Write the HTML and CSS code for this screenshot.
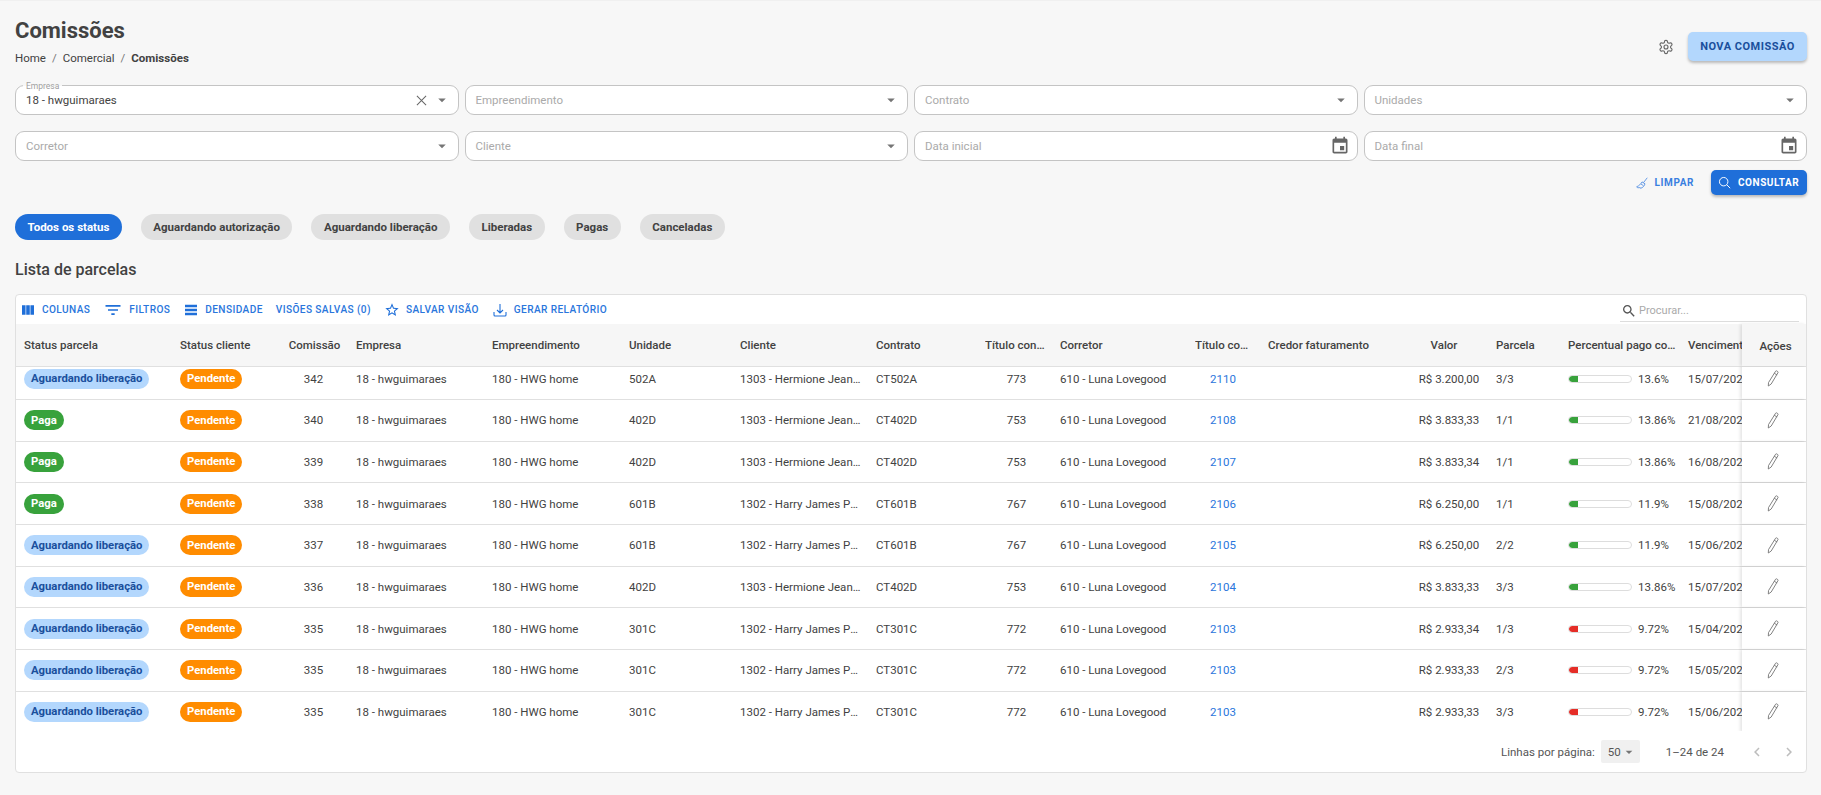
FILE: index.html
```html
<!DOCTYPE html>
<html lang="pt-BR">
<head>
<meta charset="utf-8">
<title>Comissões</title>
<link rel="stylesheet" href="styles.css">
</head>
<body>
<svg class="defs" width="0" height="0" aria-hidden="true">
  <symbol id="i-drop" viewBox="0 0 24 24"><path d="M7 10l5 5 5-5z"/></symbol>
  <symbol id="i-cal" viewBox="0 0 24 24"><path d="M17 12h-5v5h5v-5zM16 1v2H8V1H6v2H5c-1.11 0-1.99.9-1.99 2L3 19c0 1.1.89 2 2 2h14c1.1 0 2-.9 2-2V5c0-1.1-.9-2-2-2h-1V1h-2zm3 18H5V8h14v11z"/></symbol>
  <symbol id="i-pen" viewBox="0 0 12 17"><path d="M8.6 1.2c.3-.4.7-.5 1.1-.3l1 .6c.4.3.5.7.3 1.1L4.2 14 1.3 16l.2-3.4zM7.2 3.2l2.9 1.8" fill="none" stroke="currentColor" stroke-width=".9" stroke-linejoin="round"/></symbol>
</svg>
<main class="page">
  <header class="top">
    <div class="top-left">
      <h1 class="title">Comissões</h1>
      <nav class="crumbs"><span>Home</span><span class="sep">/</span><span>Comercial</span><span class="sep">/</span><strong>Comissões</strong></nav>
    </div>
    <div class="top-right">
      <svg class="gear" viewBox="0 0 24 24" fill="none" stroke="currentColor" stroke-width="1.7" stroke-linejoin="round"><path d="M12.22 2h-.44a2 2 0 0 0-2 2v.18a2 2 0 0 1-1 1.73l-.43.25a2 2 0 0 1-2 0l-.15-.08a2 2 0 0 0-2.73.73l-.22.38a2 2 0 0 0 .73 2.73l.15.1a2 2 0 0 1 1 1.72v.51a2 2 0 0 1-1 1.74l-.15.09a2 2 0 0 0-.73 2.73l.22.38a2 2 0 0 0 2.73.73l.15-.08a2 2 0 0 1 2 0l.43.25a2 2 0 0 1 1 1.73V20a2 2 0 0 0 2 2h.44a2 2 0 0 0 2-2v-.18a2 2 0 0 1 1-1.73l.43-.25a2 2 0 0 1 2 0l.15.08a2 2 0 0 0 2.73-.73l.22-.39a2 2 0 0 0-.73-2.73l-.15-.08a2 2 0 0 1-1-1.74v-.5a2 2 0 0 1 1-1.74l.15-.09a2 2 0 0 0 .73-2.73l-.22-.38a2 2 0 0 0-2.73-.73l-.15.08a2 2 0 0 1-2 0l-.43-.25a2 2 0 0 1-1-1.73V4a2 2 0 0 0-2-2z"/><circle cx="12" cy="12" r="3"/></svg>
      <button class="btn-new">NOVA COMISSÃO</button>
    </div>
  </header>

  <section class="filters">
    <div class="field"><span class="float">Empresa</span><span class="value">18 - hwguimaraes</span>
      <svg class="x" viewBox="0 0 12 12" fill="none" stroke="currentColor" stroke-width="1.1"><path d="M1 1l10 10M11 1L1 11"/></svg>
      <svg class="drop"><use href="#i-drop"/></svg></div>
    <div class="field"><span class="ph">Empreendimento</span><svg class="drop"><use href="#i-drop"/></svg></div>
    <div class="field"><span class="ph">Contrato</span><svg class="drop"><use href="#i-drop"/></svg></div>
    <div class="field"><span class="ph">Unidades</span><svg class="drop"><use href="#i-drop"/></svg></div>
    <div class="field"><span class="ph">Corretor</span><svg class="drop"><use href="#i-drop"/></svg></div>
    <div class="field"><span class="ph">Cliente</span><svg class="drop"><use href="#i-drop"/></svg></div>
    <div class="field"><span class="ph">Data inicial</span><svg class="cal"><use href="#i-cal"/></svg></div>
    <div class="field"><span class="ph">Data final</span><svg class="cal"><use href="#i-cal"/></svg></div>
  </section>

  <div class="actions">
    <button class="btn-clear">
      <svg class="broom" viewBox="0 0 16 16" fill="none" stroke="currentColor" stroke-width="1" stroke-linejoin="round"><path d="M15 1L10 7.5M8 6.5l4 2.6c-.7 2.8-3 5.2-6 6l-.8-1.4-.9 1L2.7 14l-.6.3L.8 13c3.2-1 5.6-3.6 7.2-6.5zM6.4 9.2l3.6 2.4"/></svg>
      LIMPAR</button>
    <button class="btn-search">
      <svg class="mag" viewBox="0 0 16 16" fill="none" stroke="currentColor" stroke-width="1.2"><circle cx="7" cy="7" r="5.2"/><path d="M10.8 10.8l4.2 4.2"/></svg>
      CONSULTAR</button>
  </div>

  <div class="pills">
    <span class="pill on">Todos os status</span>
    <span class="pill">Aguardando autorização</span>
    <span class="pill">Aguardando liberação</span>
    <span class="pill">Liberadas</span>
    <span class="pill">Pagas</span>
    <span class="pill">Canceladas</span>
  </div>

  <h2 class="list-title">Lista de parcelas</h2>

  <section class="card">
    <div class="toolbar">
      <button class="tool"><svg class="t16" viewBox="0 0 24 24"><path d="M14.67 5v14H9.33V5h5.34zm1 14H21V5h-5.33v14zm-7.34 0V5H3v14h5.33z"/></svg>COLUNAS</button>
      <button class="tool"><svg class="t20" viewBox="0 0 24 24"><path d="M10 18h4v-2h-4v2zM3 6v2h18V6H3zm3 7h12v-2H6v2z"/></svg>FILTROS</button>
      <button class="tool"><svg class="t16" viewBox="0 0 24 24"><path d="M21 8H3V4h18v4zm0 2H3v4h18v-4zm0 6H3v4h18v-4z"/></svg>DENSIDADE</button>
      <button class="tool">VISÕES SALVAS (0)</button>
      <button class="tool"><svg class="t16" viewBox="0 0 24 24"><path d="M22 9.24l-7.19-.62L12 2 9.19 8.63 2 9.24l5.46 4.73L5.82 21 12 17.27 18.18 21l-1.63-7.03L22 9.24zM12 15.4l-3.76 2.27 1-4.28-3.32-2.88 4.38-.38L12 6.1l1.71 4.04 4.38.38-3.32 2.88 1 4.28L12 15.4z"/></svg>SALVAR VISÃO</button>
      <button class="tool"><svg class="t16 ln" viewBox="0 0 16 16"><path d="M2 10v3a1 1 0 0 0 1 1h10a1 1 0 0 0 1-1v-3M8 2v8.5M5 8l3 3 3-3"/></svg>GERAR RELATÓRIO</button>
      <div class="search">
        <svg class="search-i" viewBox="0 0 24 24"><path d="M15.5 14h-.79l-.28-.27C15.41 12.59 16 11.11 16 9.5 16 5.91 13.09 3 9.5 3S3 5.91 3 9.5 5.91 16 9.5 16c1.61 0 3.09-.59 4.23-1.57l.27.28v.79l5 4.99L20.49 19l-4.99-5zm-6 0C7.01 14 5 11.99 5 9.5S7.01 5 9.5 5 14 7.01 14 9.5 11.99 14 9.5 14z"/></svg>
        <span class="search-ph">Procurar...</span>
      </div>
    </div>

    <div class="row head">
      <div class="c">Status parcela</div><div class="c">Status cliente</div><div class="c mid h-com">Comissão</div><div class="c">Empresa</div><div class="c">Empreendimento</div><div class="c">Unidade</div><div class="c">Cliente</div><div class="c">Contrato</div><div class="c mid h-tc"><span class="clip">Título contrato</span></div><div class="c">Corretor</div><div class="c mid h-tc2"><span class="clip">Título comissão</span></div><div class="c">Credor faturamento</div><div class="c mid h-val">Valor</div><div class="c">Parcela</div><div class="c h-pct"><span class="clip">Percentual pago comissão</span></div><div class="c cut">Vencimento</div><div class="c act act-h">Ações</div>
    </div>

    <div class="body">
      <div class="row"><div class="c"><span class="chip wait">Aguardando liberação</span></div><div class="c"><span class="chip pend">Pendente</span></div><div class="c mid">342</div><div class="c">18 - hwguimaraes</div><div class="c">180 - HWG home</div><div class="c">502A</div><div class="c"><span class="clip">1303 - Hermione Jean Granger</span></div><div class="c">CT502A</div><div class="c mid">773</div><div class="c">610 - Luna Lovegood</div><div class="c mid link">2110</div><div class="c"></div><div class="c mid">R$ 3.200,00</div><div class="c">3/3</div><div class="c pct"><span class="bar"><span class="fill ok" style="width:13.6%"></span></span>13.6%</div><div class="c cut">15/07/2025</div><div class="c act"><svg class="pen"><use href="#i-pen"/></svg></div></div>
      <div class="row"><div class="c"><span class="chip paid">Paga</span></div><div class="c"><span class="chip pend">Pendente</span></div><div class="c mid">340</div><div class="c">18 - hwguimaraes</div><div class="c">180 - HWG home</div><div class="c">402D</div><div class="c"><span class="clip">1303 - Hermione Jean Granger</span></div><div class="c">CT402D</div><div class="c mid">753</div><div class="c">610 - Luna Lovegood</div><div class="c mid link">2108</div><div class="c"></div><div class="c mid">R$ 3.833,33</div><div class="c">1/1</div><div class="c pct"><span class="bar"><span class="fill ok" style="width:13.86%"></span></span>13.86%</div><div class="c cut">21/08/2025</div><div class="c act"><svg class="pen"><use href="#i-pen"/></svg></div></div>
      <div class="row"><div class="c"><span class="chip paid">Paga</span></div><div class="c"><span class="chip pend">Pendente</span></div><div class="c mid">339</div><div class="c">18 - hwguimaraes</div><div class="c">180 - HWG home</div><div class="c">402D</div><div class="c"><span class="clip">1303 - Hermione Jean Granger</span></div><div class="c">CT402D</div><div class="c mid">753</div><div class="c">610 - Luna Lovegood</div><div class="c mid link">2107</div><div class="c"></div><div class="c mid">R$ 3.833,34</div><div class="c">1/1</div><div class="c pct"><span class="bar"><span class="fill ok" style="width:13.86%"></span></span>13.86%</div><div class="c cut">16/08/2025</div><div class="c act"><svg class="pen"><use href="#i-pen"/></svg></div></div>
      <div class="row"><div class="c"><span class="chip paid">Paga</span></div><div class="c"><span class="chip pend">Pendente</span></div><div class="c mid">338</div><div class="c">18 - hwguimaraes</div><div class="c">180 - HWG home</div><div class="c">601B</div><div class="c"><span class="clip">1302 - Harry James Potter</span></div><div class="c">CT601B</div><div class="c mid">767</div><div class="c">610 - Luna Lovegood</div><div class="c mid link">2106</div><div class="c"></div><div class="c mid">R$ 6.250,00</div><div class="c">1/1</div><div class="c pct"><span class="bar"><span class="fill ok" style="width:11.9%"></span></span>11.9%</div><div class="c cut">15/08/2025</div><div class="c act"><svg class="pen"><use href="#i-pen"/></svg></div></div>
      <div class="row"><div class="c"><span class="chip wait">Aguardando liberação</span></div><div class="c"><span class="chip pend">Pendente</span></div><div class="c mid">337</div><div class="c">18 - hwguimaraes</div><div class="c">180 - HWG home</div><div class="c">601B</div><div class="c"><span class="clip">1302 - Harry James Potter</span></div><div class="c">CT601B</div><div class="c mid">767</div><div class="c">610 - Luna Lovegood</div><div class="c mid link">2105</div><div class="c"></div><div class="c mid">R$ 6.250,00</div><div class="c">2/2</div><div class="c pct"><span class="bar"><span class="fill ok" style="width:11.9%"></span></span>11.9%</div><div class="c cut">15/06/2025</div><div class="c act"><svg class="pen"><use href="#i-pen"/></svg></div></div>
      <div class="row"><div class="c"><span class="chip wait">Aguardando liberação</span></div><div class="c"><span class="chip pend">Pendente</span></div><div class="c mid">336</div><div class="c">18 - hwguimaraes</div><div class="c">180 - HWG home</div><div class="c">402D</div><div class="c"><span class="clip">1303 - Hermione Jean Granger</span></div><div class="c">CT402D</div><div class="c mid">753</div><div class="c">610 - Luna Lovegood</div><div class="c mid link">2104</div><div class="c"></div><div class="c mid">R$ 3.833,33</div><div class="c">3/3</div><div class="c pct"><span class="bar"><span class="fill ok" style="width:13.86%"></span></span>13.86%</div><div class="c cut">15/07/2025</div><div class="c act"><svg class="pen"><use href="#i-pen"/></svg></div></div>
      <div class="row"><div class="c"><span class="chip wait">Aguardando liberação</span></div><div class="c"><span class="chip pend">Pendente</span></div><div class="c mid">335</div><div class="c">18 - hwguimaraes</div><div class="c">180 - HWG home</div><div class="c">301C</div><div class="c"><span class="clip">1302 - Harry James Potter</span></div><div class="c">CT301C</div><div class="c mid">772</div><div class="c">610 - Luna Lovegood</div><div class="c mid link">2103</div><div class="c"></div><div class="c mid">R$ 2.933,34</div><div class="c">1/3</div><div class="c pct"><span class="bar"><span class="fill low" style="width:9.72%"></span></span>9.72%</div><div class="c cut">15/04/2025</div><div class="c act"><svg class="pen"><use href="#i-pen"/></svg></div></div>
      <div class="row"><div class="c"><span class="chip wait">Aguardando liberação</span></div><div class="c"><span class="chip pend">Pendente</span></div><div class="c mid">335</div><div class="c">18 - hwguimaraes</div><div class="c">180 - HWG home</div><div class="c">301C</div><div class="c"><span class="clip">1302 - Harry James Potter</span></div><div class="c">CT301C</div><div class="c mid">772</div><div class="c">610 - Luna Lovegood</div><div class="c mid link">2103</div><div class="c"></div><div class="c mid">R$ 2.933,33</div><div class="c">2/3</div><div class="c pct"><span class="bar"><span class="fill low" style="width:9.72%"></span></span>9.72%</div><div class="c cut">15/05/2025</div><div class="c act"><svg class="pen"><use href="#i-pen"/></svg></div></div>
      <div class="row"><div class="c"><span class="chip wait">Aguardando liberação</span></div><div class="c"><span class="chip pend">Pendente</span></div><div class="c mid">335</div><div class="c">18 - hwguimaraes</div><div class="c">180 - HWG home</div><div class="c">301C</div><div class="c"><span class="clip">1302 - Harry James Potter</span></div><div class="c">CT301C</div><div class="c mid">772</div><div class="c">610 - Luna Lovegood</div><div class="c mid link">2103</div><div class="c"></div><div class="c mid">R$ 2.933,33</div><div class="c">3/3</div><div class="c pct"><span class="bar"><span class="fill low" style="width:9.72%"></span></span>9.72%</div><div class="c cut">15/06/2025</div><div class="c act"><svg class="pen"><use href="#i-pen"/></svg></div></div>
    </div>

    <footer class="foot">
      <span class="foot-label">Linhas por página:</span>
      <span class="per"><span>50</span><svg class="per-drop"><use href="#i-drop"/></svg></span>
      <span class="range">1–24 de 24</span>
      <svg class="chev" viewBox="0 0 24 24"><path d="M15.41 7.41L14 6l-6 6 6 6 1.41-1.41L10.83 12z"/></svg>
      <svg class="chev" viewBox="0 0 24 24"><path d="M10 6L8.59 7.41 13.17 12l-4.58 4.59L10 18l6-6z"/></svg>
    </footer>
  </section>
</main>
</body>
</html>
```

FILE: styles.css
```css
* { box-sizing: border-box; }
html, body { margin: 0; height: 100%; }
body { background: #f7f7f7; color: #424242; font-family: Roboto, "Liberation Sans", sans-serif; font-size: 11.5px; overflow: hidden; }
button { font-family: inherit; border: 0; background: none; padding: 0; cursor: pointer; }
.defs { position: absolute; }
.page { height: 795px; padding: 0 14px 0 15px; border-top: 1px solid #f0f0f0; }

.top { display: flex; justify-content: space-between; height: 84px; padding-top: 16px; }
.title { margin: 0; font-size: 22px; line-height: 28px; font-weight: 700; color: #424242; }
.crumbs { display: flex; margin-top: 5px; font-size: 11.5px; line-height: 16px; color: #424242; }
.crumbs .sep { margin: 0 6px; color: #777; }
.crumbs strong { font-weight: 700; }
.top-right { display: flex; align-items: center; height: 29px; margin-top: 15px; }
.gear { width: 16px; height: 16px; color: #666; margin-right: 14px; }
.btn-new { width: 119px; height: 29px; border-radius: 5px; background: #b3d7fd; color: #1a4f9c; font-size: 11px; font-weight: 700; letter-spacing: .5px; box-shadow: 0 2px 3px rgba(0,0,0,.25); }

.filters { display: grid; grid-template-columns: repeat(4, 1fr); gap: 16px 6px; }
.field { position: relative; display: flex; align-items: center; height: 30px; padding: 0 7px 0 10px; background: #fff; border: 1px solid #c4c4c4; border-radius: 9px; font-size: 11.5px; }
.float { position: absolute; left: 7px; top: -5px; padding: 0 3px; font-size: 8.5px; line-height: 10px; color: #a0a0a0; background: linear-gradient(#f7f7f7 50%, #fff 50%); }
.value { flex: 1; color: #424242; }
.ph { flex: 1; color: #aaa; }
.x { width: 11px; height: 11px; color: #666; margin-right: 6px; }
.drop { width: 18px; height: 18px; fill: #757575; }
.cal { width: 20px; height: 20px; fill: #666; }

.actions { display: flex; justify-content: flex-end; align-items: center; margin-top: 9px; height: 25px; }
.btn-clear { display: flex; align-items: center; gap: 7px; color: #3a7fe0; font-size: 10px; font-weight: 700; letter-spacing: .6px; margin-right: 17px; }
.broom { width: 12px; height: 12px; }
.btn-search { display: flex; align-items: center; gap: 7px; width: 96px; height: 25px; padding-left: 7px; border-radius: 5px; background: #1f6fd9; color: #fff; font-size: 10px; font-weight: 700; letter-spacing: .55px; box-shadow: 0 2px 3px rgba(0,0,0,.25); }
.mag { width: 13px; height: 13px; }

.pills { display: flex; gap: 19px; margin-top: 19px; }
.pill { display: flex; align-items: center; height: 26px; padding: 0 12.5px; border-radius: 13px; background: #e0e0e0; color: #424242; font-size: 11.5px; font-weight: 700; }
.pill.on { background: #1f6fd9; color: #fff; }

.list-title { margin: 20px 0 0; height: 20px; font-size: 16px; line-height: 20px; font-weight: 500; color: #424242; }

.card { margin-top: 14px; height: 479px; background: #fff; border: 1px solid #e0e0e0; border-radius: 4px; overflow: hidden; }

.toolbar { display: flex; align-items: center; gap: 13px; height: 29px; padding: 0 7px 0 4px; }
.tool { display: flex; align-items: center; gap: 6px; color: #2a76dc; font-size: 10.1px; font-weight: 500; letter-spacing: .4px; white-space: nowrap; }
.tool svg { fill: #1f6fd9; flex: none; }
.tool .ln { fill: none; stroke: #1f6fd9; stroke-width: 1.1; }
.t16 { width: 16px; height: 16px; }
.t20 { width: 20px; height: 20px; }
.search { display: flex; align-items: center; gap: 2px; width: 179px; height: 22px; margin: 3px 0 0 auto; border-bottom: 1px solid #ddd; }
.search-i { width: 16px; height: 16px; fill: #555; margin-left: 1px; }
.search-ph { font-size: 11px; color: #aaa; }

.row { display: grid; grid-template-columns: 156px 107px 69px 136px 137px 111px 136px 113px 71px 134px 74px 150px 78px 72px 120px 62px 64px; align-items: stretch; height: 41.67px; border-bottom: 1px solid #e0e0e0; }
.c { display: flex; align-items: center; min-width: 0; padding: 0 8px; white-space: nowrap; overflow: hidden; color: #424242; font-size: 11.5px; }
.mid { justify-content: center; }
.clip { overflow: hidden; text-overflow: ellipsis; }
.body .clip { margin-right: -3px; }
.cut { padding-right: 0; }
.link { color: #2a76dc; }

.head { height: 43px; background: #f6f6f6; }
.head .c { font-weight: 500; }
.h-com { padding-left: 10px; }
.h-tc { padding: 0 4px; }
.h-tc2 { padding: 0 9px; }
.h-val { padding-right: 18px; }
.h-pct { padding-right: 3px; }

.act { justify-content: center; padding: 0; background: #fff; box-shadow: -2px 0 3px rgba(0,0,0,.1); overflow: visible; }
.act-h { background: #f6f6f6; padding: 2px 0 0 3px; }
.pen { width: 12px; height: 17px; color: #757575; margin-left: -2px; }

.body { height: 364px; overflow: hidden; }
.body .row:first-child { margin-top: -8.67px; }

.chip { display: inline-flex; align-items: center; height: 20px; padding: 0 7px; border-radius: 10px; font-size: 11.3px; font-weight: 700; }
.wait { background: #b3d7fd; color: #1a4f9c; }
.paid { background: #38a23c; color: #fff; }
.pend { background: #ff8c00; color: #fff; }

.pct { gap: 6px; }
.bar { display: block; flex: none; width: 64px; height: 8px; border: 1px solid #ddd; border-radius: 4px; overflow: hidden; background: #fff; }
.fill { display: block; height: 100%; min-width: 9px; border-radius: 3px 0 0 3px; }
.ok { background: #38a23c; }
.low { background: #e52d27; }

.foot { display: flex; align-items: center; height: 41px; }
.foot-label { margin-left: auto; color: #555; font-size: 11.5px; }
.per { display: flex; align-items: center; justify-content: space-between; width: 39px; height: 23px; margin-left: 6px; padding: 0 3px 0 7px; background: #f0f0f0; border-radius: 2px; color: #555; }
.per-drop { width: 16px; height: 16px; fill: #757575; }
.range { margin: 0 24px 0 26px; color: #555; font-size: 11.5px; }
.chev { width: 18px; height: 18px; fill: #bdbdbd; margin-right: 14px; }
.chev:last-child { margin-right: 8px; }
```
